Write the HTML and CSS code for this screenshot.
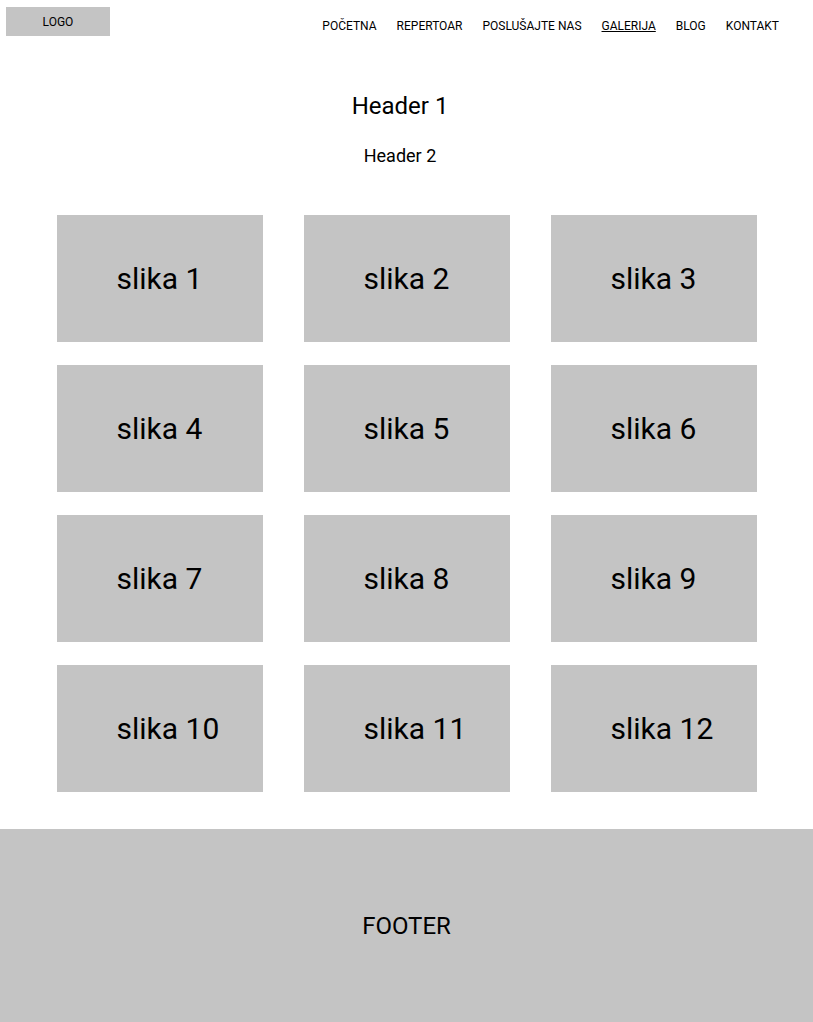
FILE: index.html
```html
<!DOCTYPE html>
<html lang="sr">
<head>
  <meta charset="UTF-8" />
  <meta name="viewport" content="width=device-width, initial-scale=1.0"/>
  <title>Galerija</title>
  <link rel="stylesheet" href="styles.css">
</head>
<body>

  <header class="top-bar">
    <div class="logo">LOGO</div>
    <nav>
      <ul class="menu">
        <li><a href="#">POČETNA</a></li>
        <li><a href="#">REPERTOAR</a></li>
        <li><a href="#">POSLUŠAJTE NAS</a></li>
        <li><a href="#" class="active">GALERIJA</a></li>
        <li><a href="#">BLOG</a></li>
        <li><a href="#">KONTAKT</a></li>
      </ul>
    </nav>
  </header>

  <div class="titles">
    <h1>Header 1</h1>
    <h2>Header 2</h2>
  </div>

  <main class="gallery">
    <div class="tile">slika 1</div>
    <div class="tile">slika 2</div>
    <div class="tile">slika 3</div>
    <div class="tile">slika 4</div>
    <div class="tile">slika 5</div>
    <div class="tile">slika 6</div>
    <div class="tile">slika 7</div>
    <div class="tile">slika 8</div>
    <div class="tile">slika 9</div>
    <div class="tile">slika 10</div>
    <div class="tile">slika 11</div>
    <div class="tile">slika 12</div>
  </main>

  <footer class="footer">FOOTER</footer>

</body>
</html>
```

FILE: styles.css
```css
body {
  margin: 0;
  font-family: Roboto, 'Liberation Sans', sans-serif;
  color: #000;
  background: #fff;
}

.top-bar {
  display: flex;
  justify-content: space-between;
  align-items: flex-start;
  padding: 7px 34px 0 6px;
}

.logo {
  width: 104px;
  height: 29px;
  background-color: #c4c4c4;
  display: flex;
  align-items: center;
  justify-content: center;
  font-size: 12px;
}

.menu {
  list-style: none;
  display: flex;
  gap: 20px;
  margin: 8px 0 0 0;
  padding: 0;
}

.menu a {
  color: #000;
  text-decoration: none;
  font-size: 12px;
}

.menu a.active {
  text-decoration: underline;
}

.titles {
  text-align: center;
  padding: 56px 13px 0 0;
}

.titles h1 {
  margin: 0;
  font-size: 24px;
  font-weight: 400;
}

.titles h2 {
  margin: 25px 0 0 0;
  font-size: 18px;
  font-weight: 400;
}

.gallery {
  display: grid;
  grid-template-columns: repeat(3, 206px);
  grid-auto-rows: 127px;
  column-gap: 41px;
  row-gap: 23px;
  justify-content: center;
  margin-top: 49px;
}

.tile {
  background-color: #c4c4c4;
  display: flex;
  align-items: center;
  padding-left: 60px;
  font-size: 30px;
}

.footer {
  margin-top: 37px;
  height: 193px;
  background-color: #c4c4c4;
  display: flex;
  align-items: center;
  justify-content: center;
  font-size: 24px;
}
```
